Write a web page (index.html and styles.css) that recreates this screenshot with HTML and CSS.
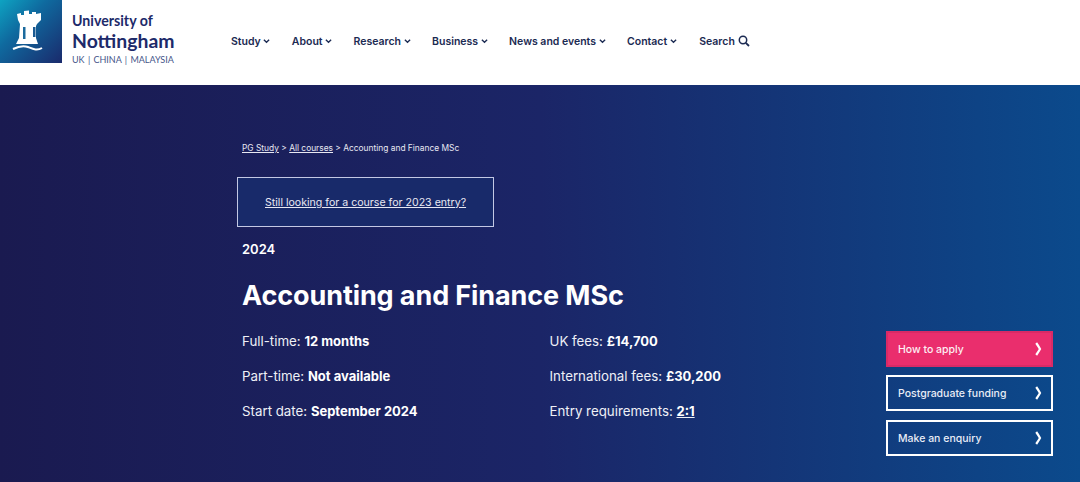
FILE: index.html
```html
<!DOCTYPE html>
<html lang="en">
<head>
<meta charset="utf-8">
<title>Accounting and Finance MSc</title>
<link rel="stylesheet" href="styles.css">
</head>
<body>
<header class="header">
  <a class="logo-mark" href="#" aria-label="University of Nottingham">
    <svg viewBox="0 0 62 63" width="62" height="63">
      <path fill="#fff" d="M17 14l4-1v2h3v-4l5-.5V14h3v-2l4 0v2l5-1v7l-4 4-1 2v12l2 6H16l3-6 1-14-2-4z"/>
      <rect x="23" y="27" width="2.500" height="12" fill="#1b6a9e"/>
      <rect x="33" y="27" width="2.500" height="10" fill="#1a5a92"/>
      <path fill="none" stroke="#fff" stroke-width="2" d="M13 49c6-3 10-4 15-2s9 4 14 1"/>
    </svg>
  </a>
  <a class="wordmark" href="#">
    <span class="uni">University of</span>
    <span class="nott">Nottingham</span>
    <span class="campus">UK <i>|</i> CHINA <i>|</i> MALAYSIA</span>
  </a>
  <nav class="nav">
    <a href="#">Study<svg class="chev" viewBox="0 0 8 6" width="7" height="6"><path d="M1 1.500l3 3 3-3" fill="none" stroke="currentColor" stroke-width="1.500"/></svg></a>
    <a href="#">About<svg class="chev" viewBox="0 0 8 6" width="7" height="6"><path d="M1 1.500l3 3 3-3" fill="none" stroke="currentColor" stroke-width="1.500"/></svg></a>
    <a href="#">Research<svg class="chev" viewBox="0 0 8 6" width="7" height="6"><path d="M1 1.500l3 3 3-3" fill="none" stroke="currentColor" stroke-width="1.500"/></svg></a>
    <a href="#">Business<svg class="chev" viewBox="0 0 8 6" width="7" height="6"><path d="M1 1.500l3 3 3-3" fill="none" stroke="currentColor" stroke-width="1.500"/></svg></a>
    <a href="#">News and events<svg class="chev" viewBox="0 0 8 6" width="7" height="6"><path d="M1 1.500l3 3 3-3" fill="none" stroke="currentColor" stroke-width="1.500"/></svg></a>
    <a href="#">Contact<svg class="chev" viewBox="0 0 8 6" width="7" height="6"><path d="M1 1.500l3 3 3-3" fill="none" stroke="currentColor" stroke-width="1.500"/></svg></a>
    <a class="search" href="#">Search<svg class="mag" viewBox="0 0 12 12" width="12" height="12"><circle cx="5" cy="5" r="3.700" fill="none" stroke="currentColor" stroke-width="1.500"/><path d="M7.800 7.800L11 11" stroke="currentColor" stroke-width="1.800"/></svg></a>
  </nav>
</header>
<main class="hero">
  <div class="content">
    <p class="crumbs"><a href="#">PG Study</a> &gt; <a href="#">All courses</a> &gt; Accounting and Finance MSc</p>
    <div class="notice"><a href="#">Still looking for a course for 2023 entry?</a></div>
    <p class="year">2024</p>
    <h1 class="title">Accounting and Finance MSc</h1>
    <div class="facts">
      <p>Full-time: <b>12 months</b></p>
      <p>UK fees: <b>£14,700</b></p>
      <p>Part-time: <b>Not available</b></p>
      <p>International fees: <b>£30,200</b></p>
      <p>Start date: <b>September 2024</b></p>
      <p>Entry requirements: <a href="#"><b>2:1</b></a></p>
    </div>
  </div>
  <div class="actions">
    <a class="btn btn-pink" href="#">How to apply<svg class="arrow" viewBox="0 0 7 14" width="7" height="14"><path d="M1.200 1c2 2.800 3 4.500 3.800 6-.8 1.500-1.800 3.200-3.800 6" fill="none" stroke="#fff" stroke-width="2.200"/></svg></a>
    <a class="btn" href="#">Postgraduate funding<svg class="arrow" viewBox="0 0 7 14" width="7" height="14"><path d="M1.200 1c2 2.800 3 4.500 3.800 6-.8 1.500-1.800 3.200-3.800 6" fill="none" stroke="#fff" stroke-width="2.200"/></svg></a>
    <a class="btn" href="#">Make an enquiry<svg class="arrow" viewBox="0 0 7 14" width="7" height="14"><path d="M1.200 1c2 2.800 3 4.500 3.800 6-.8 1.500-1.800 3.200-3.800 6" fill="none" stroke="#fff" stroke-width="2.200"/></svg></a>
  </div>
</main>
</body>
</html>
```
FILE: styles.css
```css
* { box-sizing: border-box; }
html, body { margin: 0; height: 482px; overflow: hidden; }
body { font-family: Inter, "Liberation Sans", sans-serif; background: #fff; }
a { color: inherit; }
.header { height: 85px; display: flex; align-items: flex-start; background: #fff; }
.logo-mark { width: 62px; height: 63px; display: block; background: linear-gradient(135deg, #0ea3c2 0%, #0f6a9f 38%, #1a2a6c 100%); }
.logo-mark svg { display: block; }
.wordmark { margin-left: 10px; width: 103px; padding-top: 12px; display: flex; flex-direction: column; color: #1d2a6a; text-decoration: none; font-family: Lato, sans-serif; white-space: nowrap; }
.uni { font-size: 14.200px; font-weight: 700; line-height: 17px; }
.nott { font-size: 19.400px; font-weight: 700; line-height: 23px; }
.campus { font-size: 9px; line-height: 14px; margin-top: 1px; color: #45558a; }
.campus i { font-style: normal; margin: 0 1px; }
.nav { margin-left: 56px; height: 82px; display: flex; align-items: center; gap: 21.500px; font-size: 10.500px; font-weight: 600; color: #1b2a52; }
.nav a { text-decoration: none; display: flex; align-items: center; gap: 2.500px; white-space: nowrap; }
.nav .search { margin-left: 1px; gap: 3px; }
.hero { height: 397px; padding-top: 54px; position: relative; color: #fff; background: linear-gradient(90deg, #1a1a50 0%, #1b2567 50%, #0b4a8c 100%); }
.content { margin-left: 237px; width: 600px; }
.crumbs { margin: 0 0 0 5px; font-size: 8.400px; line-height: 18px; color: #e8e8f2; }
.notice { margin-top: 20px; width: 257px; height: 50px; border: 1px solid #c3c8e4; background: #182a6a; display: flex; align-items: center; padding: 1px 0 0 27px; font-size: 10.600px; color: #e8e8f2; }
.year { margin: 13px 0 0 5px; font-size: 13px; font-weight: 600; line-height: 18px; }
.title { margin: 20px 0 0 5px; font-size: 27px; font-weight: 700; line-height: 36px; letter-spacing: -0.1px; }
.facts { margin: 18px 0 0 5px; display: grid; grid-template-columns: 307.500px 1fr; row-gap: 17px; font-size: 13.300px; line-height: 18px; }
.facts p { margin: 0; color: #eef0f6; }
.facts b { font-weight: 700; font-size: 13px; color: #fff; }
.actions { position: absolute; left: 886px; top: 246px; width: 167px; display: flex; flex-direction: column; gap: 9px; }
.btn { height: 36px; border: 2px solid #fff; display: flex; align-items: center; justify-content: space-between; padding: 0 9px 0 10px; font-size: 10.500px; font-weight: 500; text-decoration: none; color: #e8ecf6; }
.btn-pink { margin-bottom: -1px; background: #ea2e6d; border-color: #d92a66; color: #fdeef3; }
```
